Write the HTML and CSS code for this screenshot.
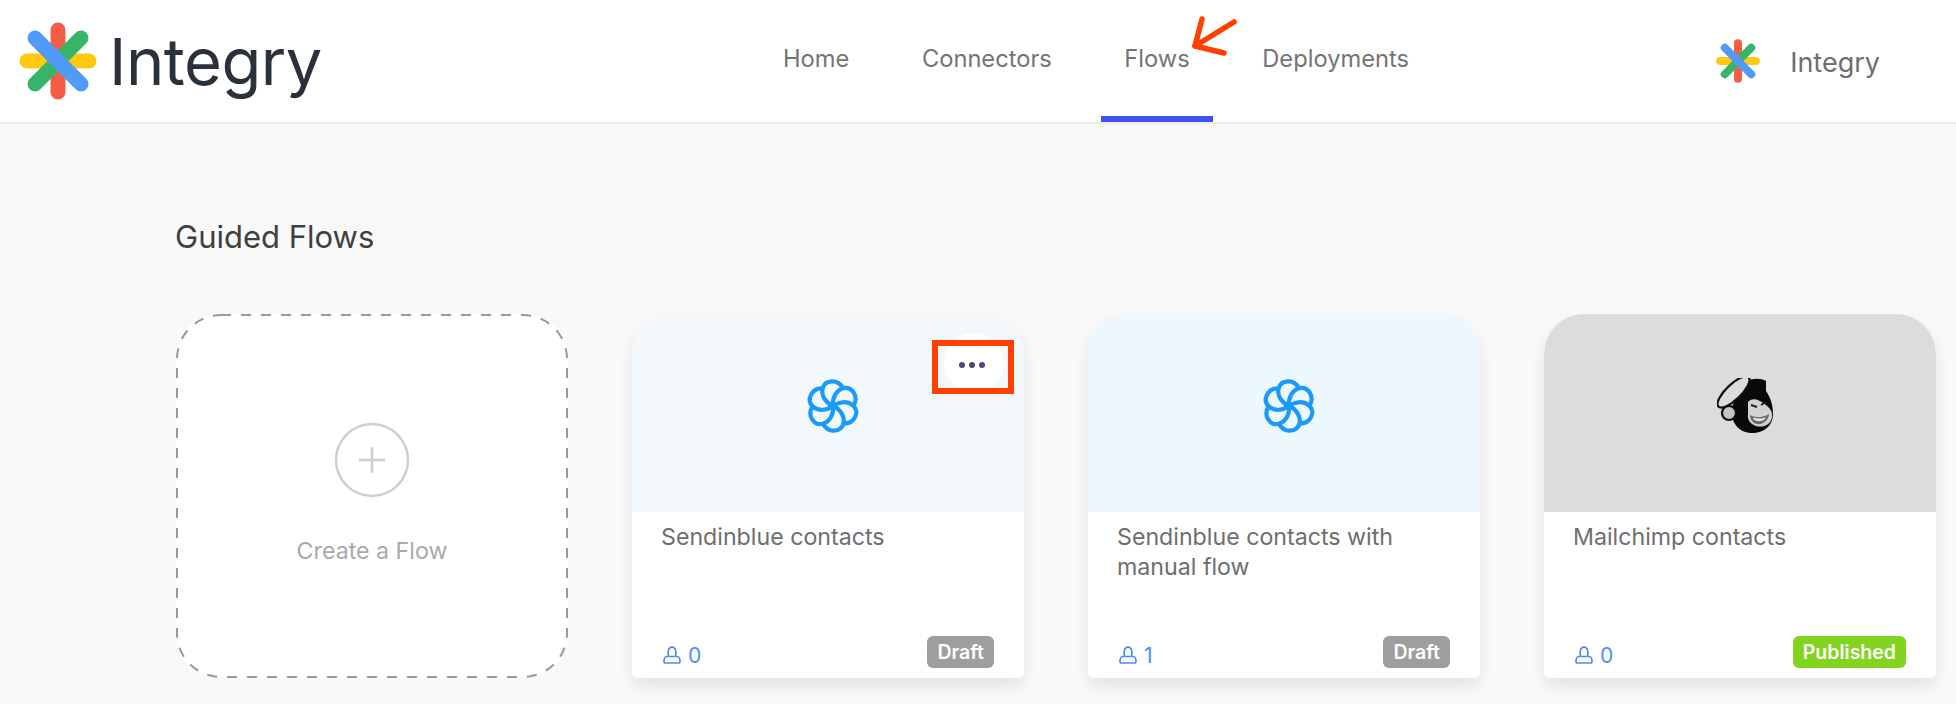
FILE: index.html
```html
<!DOCTYPE html>
<html lang="en">
<head>
<meta charset="utf-8">
<title>Integry Flows</title>
<link rel="stylesheet" href="styles.css">
</head>
<body>
<svg class="defs" width="0" height="0" aria-hidden="true">
  <defs>
    <g id="star" fill="none" stroke-linecap="round">
      <path d="M-31 0H31" stroke="#ffc90e"/>
      <path d="M0 -31V31" stroke="#f55e45"/>
      <path d="M-23 23L23 -23" stroke="#38b36a"/>
      <path d="M-23 -23L23 23" stroke="#4f9bf7"/>
    </g>
    <g id="swirl" fill="none" stroke="#1a9bfb" stroke-width="4.200" stroke-linecap="round">
      <g id="petal">
        <path d="M0 0C-7 -3 -12 -10 -10.500 -17.500C-8 -26.500 5 -27.500 10 -17.800"/>
      </g>
      <use href="#petal" transform="rotate(60)"/>
      <use href="#petal" transform="rotate(120)"/>
      <use href="#petal" transform="rotate(180)"/>
      <use href="#petal" transform="rotate(240)"/>
      <use href="#petal" transform="rotate(300)"/>
    </g>
    <g id="user" fill="none" stroke="#4d8dfc" stroke-width="1.700" stroke-linejoin="round">
      <path d="M5.500 10.500C4.500 6 5 1.200 9 1.200S13.500 6 12.500 10.500"/>
      <path d="M3.500 10.500H14.500C16 10.500 17 13 17 15.200C17 16.500 16.500 17 15.500 17H2.500C1.500 17 1 16.500 1 15.200C1 13 2 10.500 3.500 10.500Z"/>
    </g>
  </defs>
</svg>

<header class="topbar">
  <div class="brand">
    <svg class="brand-mark" viewBox="-40 -40 80 80"><use href="#star" stroke-width="15"/></svg>
    <span class="brand-name">Integry</span>
  </div>
  <nav class="nav">
    <a class="nav-item">Home</a>
    <a class="nav-item">Connectors</a>
    <a class="nav-item nav-item-active">Flows</a>
    <a class="nav-item">Deployments</a>
  </nav>
  <div class="account">
    <svg class="account-mark" viewBox="-40 -40 80 80"><use href="#star" stroke-width="14"/></svg>
    <span class="account-name">Integry</span>
  </div>
  <svg class="arrow" viewBox="0 0 46 40" fill="none" stroke="#ff4000" stroke-width="5.500" stroke-linecap="round" stroke-linejoin="round">
    <path d="M42 6L3 30"/>
    <path d="M10 3L3 30L32 37"/>
  </svg>
</header>

<main class="content">
  <h1 class="section-title">Guided Flows</h1>
  <section class="cards">
    <article class="create">
      <svg class="create-border" viewBox="0 0 392 364" fill="none"><rect x="1" y="1" width="390" height="362" rx="44" stroke="#999" stroke-width="2" stroke-dasharray="10 10"/></svg>
      <svg class="create-icon" viewBox="0 0 76 76" fill="none" stroke="#cfcfcf"><circle cx="38" cy="38" r="36" stroke-width="2.500"/><path d="M38 25V51M25 38H51" stroke-width="2.500"/></svg>
      <span class="create-label">Create a Flow</span>
    </article>

    <article class="card">
      <div class="card-media media-pale">
        <svg class="app-icon" viewBox="-28 -28 56 56"><use href="#swirl"/></svg>
        <span class="more"><i></i><i></i><i></i></span>
        <span class="highlight"></span>
      </div>
      <div class="card-body">
        <p class="card-title">Sendinblue contacts</p>
        <div class="card-foot">
          <span class="users"><svg class="user-icon" viewBox="0 0 18 18"><use href="#user"/></svg>0</span>
          <span class="badge badge-draft">Draft</span>
        </div>
      </div>
    </article>

    <article class="card">
      <div class="card-media media-sky">
        <svg class="app-icon" viewBox="-28 -28 56 56"><use href="#swirl"/></svg>
      </div>
      <div class="card-body">
        <p class="card-title">Sendinblue contacts with manual flow</p>
        <div class="card-foot">
          <span class="users"><svg class="user-icon" viewBox="0 0 18 18"><use href="#user"/></svg>1</span>
          <span class="badge badge-draft">Draft</span>
        </div>
      </div>
    </article>

    <article class="card">
      <div class="card-media media-grey">
        <svg class="app-icon" viewBox="0 0 56 56">
          <path d="M30 3C36 0 44 0 49 3L49 13C54 20 56 28 56 36C56 49 45 56 33 55C23 54 16 47 15 37C14 27 20 12 30 3Z" fill="#0a0a0a"/>
          <ellipse cx="16.500" cy="14" rx="21" ry="7.500" transform="rotate(-44 16.500 14)" fill="#dcdcdc" stroke="#111" stroke-width="2.200"/>
          <path d="M31 24C36 19 42 22 46 25C52 29 56 33 55 39C54 47 46 50 39 48C33 46 30 41 31 36Z" fill="#d2d2d2"/>
          <path d="M33 37C38 40 46 40 52 36C52 42 46 47 40 46C36 45 33 42 33 37Z" fill="#6a6a6a"/>
          <path d="M36 39.500C40 41 45 41 49 39L47 42C44 43.500 40 43.500 37 42Z" fill="#e6e6e6"/>
          <path d="M34 27L40 29M44 27L49 24" fill="none" stroke="#222" stroke-width="2"/>
          <circle cx="12" cy="35" r="7" fill="#c4c4c4" stroke="#111" stroke-width="2.200"/>
        </svg>
      </div>
      <div class="card-body">
        <p class="card-title">Mailchimp contacts</p>
        <div class="card-foot">
          <span class="users"><svg class="user-icon" viewBox="0 0 18 18"><use href="#user"/></svg>0</span>
          <span class="badge badge-published">Published</span>
        </div>
      </div>
    </article>
  </section>
</main>
</body>
</html>
```

FILE: styles.css
```css
* { box-sizing: border-box; }

html, body { height: 100%; }

body {
  margin: 0;
  background: #f9f9f9;
  font-family: Inter, "Liberation Sans", sans-serif;
  overflow: hidden;
}

.defs { position: absolute; }

.topbar {
  position: relative;
  display: flex;
  align-items: stretch;
  height: 124px;
  background: #fff;
  border-bottom: 2px solid #ececec;
}

.brand {
  display: flex;
  align-items: center;
  gap: 11px;
  width: 760px;
  padding-left: 18px;
}

.brand-mark { width: 80px; height: 80px; flex: none; }

.brand-name {
  font-size: 65px;
  line-height: 1;
  color: #2b313b;
  letter-spacing: -0.5px;
}

.nav { display: flex; gap: 26.500px; }

.nav-item {
  display: flex;
  align-items: center;
  padding: 0 23px;
  font-size: 23.700px;
  color: #757575;
  border-bottom: 6px solid transparent;
}

.nav-item-active { border-bottom-color: #4150f0; }

.account {
  display: flex;
  align-items: center;
  margin-left: auto;
  padding: 2px 76px 0 0;
  gap: 29px;
}

.account-mark { width: 46px; height: 46px; flex: none; margin-top: -2px; }

.account-name { font-size: 27px; color: #6e6e6e; }

.arrow {
  position: absolute;
  left: 1192px;
  top: 16px;
  width: 46px;
  height: 40px;
}

.content { padding: 0 20px 0 176px; }

.section-title {
  margin: 96px 0 60px -1px;
  font-size: 31px;
  line-height: 34px;
  font-weight: 400;
  color: #3f3f3f;
}

.cards {
  display: grid;
  grid-template-columns: repeat(4, 392px);
  gap: 64px;
}

.create {
  position: relative;
  display: flex;
  flex-direction: column;
  align-items: center;
  height: 364px;
  padding-top: 108px;
  background: #fff;
  border-radius: 44px;
}

.create-border { position: absolute; inset: 0; width: 100%; height: 100%; }

.create-icon { width: 76px; height: 76px; }

.create-label {
  margin-top: 38px;
  font-size: 23.200px;
  line-height: 30px;
  color: #aaa;
}

.card {
  display: flex;
  flex-direction: column;
  height: 364px;
  background: #fff;
  border-radius: 40px 40px 6px 6px;
  box-shadow: 0 8px 16px rgba(0, 0, 0, .09);
}

.card-media {
  position: relative;
  display: flex;
  align-items: center;
  justify-content: center;
  height: 198px;
  border-radius: 40px 40px 0 0;
}

.media-pale { background: #f3f8fc; }
.media-sky { background: #ecf7fe; }
.media-grey { background: #dcdcdc; }

.app-icon { width: 56px; height: 56px; margin: -14px 0 0 10px; }

.more {
  position: absolute;
  top: 19px;
  right: 20px;
  display: flex;
  align-items: center;
  justify-content: center;
  gap: 4px;
  width: 60px;
  height: 60px;
  padding: 3px 4px 0 0;
  background: #fff;
  border-radius: 50%;
}

.more i {
  width: 6px;
  height: 6px;
  border-radius: 50%;
  background: #47477a;
}

.highlight {
  position: absolute;
  top: 26px;
  right: 10px;
  width: 82px;
  height: 54px;
  border: 6px solid #ff4000;
}

.card-body {
  flex: 1;
  display: flex;
  flex-direction: column;
  padding: 10px 30px 10px 29px;
}

.card-title {
  flex: 1;
  margin: 0;
  font-size: 23.200px;
  line-height: 30px;
  color: #6e6e6e;
}

.card-foot {
  display: flex;
  align-items: center;
  justify-content: space-between;
}

.users {
  display: flex;
  align-items: center;
  gap: 7px;
  padding: 6px 0 0 2px;
  font-size: 21px;
  color: #4d8dfc;
}

.user-icon { width: 18px; height: 18px; }

.badge {
  height: 32px;
  padding: 0 10px;
  border-radius: 6px;
  font-size: 19.500px;
  font-weight: 600;
  line-height: 32px;
  color: #fff;
}

.badge-draft { background: #9e9e9e; }
.badge-published { background: #82d41f; }
```
